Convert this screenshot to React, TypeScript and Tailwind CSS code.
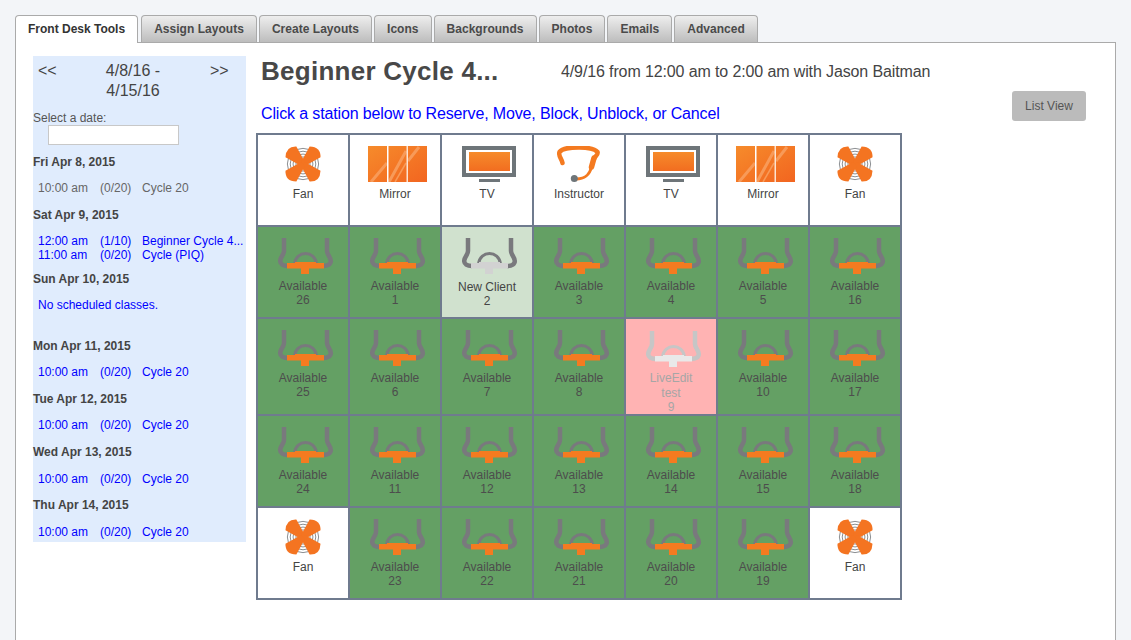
const tabs = ["Assign Layouts", "Create Layouts", "Icons", "Backgrounds", "Photos", "Emails", "Advanced"];

const days = [
  { title: "Fri Apr 8, 2015", top: "mt-[10px]", rowTop: "mt-[12px]", muted: true, rows: [["10:00 am", "(0/20)", "Cycle 20"]] },
  { title: "Sat Apr 9, 2015", top: "mt-[13px]", rowTop: "mt-[12px]", rows: [["12:00 am", "(1/10)", "Beginner Cycle 4..."], ["11:00 am", "(0/20)", "Cycle (PIQ)"]] },
  { title: "Sun Apr 10, 2015", top: "mt-[10px]", rowTop: "mt-[12px]", rows: [], empty: true },
  { title: "Mon Apr 11, 2015", top: "mt-[27px]", rowTop: "mt-[12px]", rows: [["10:00 am", "(0/20)", "Cycle 20"]] },
  { title: "Tue Apr 12, 2015", top: "mt-[13px]", rowTop: "mt-[12px]", rows: [["10:00 am", "(0/20)", "Cycle 20"]] },
  { title: "Wed Apr 13, 2015", top: "mt-[13px]", rowTop: "mt-[13px]", rows: [["10:00 am", "(0/20)", "Cycle 20"]] },
  { title: "Thu Apr 14, 2015", top: "mt-[12px]", rowTop: "mt-[13px]", rows: [["10:00 am", "(0/20)", "Cycle 20"]] },
];

function Fan() {
  return (
    <svg width="38" height="36" viewBox="0 0 38 38" className="mx-auto block">
      <g fill="none" stroke="#85888c" strokeWidth="1">
        <circle cx="19" cy="19" r="16.5" />
        <circle cx="19" cy="19" r="13.5" />
        <circle cx="19" cy="19" r="10.5" />
        <circle cx="19" cy="19" r="7.5" />
      </g>
      {[0, 90, 180, 270].map((deg) => (
        <path key={deg} transform={`rotate(${deg} 19 19)`} fill="#f47421" d="M21 17 L12 0.5 Q1 0 0.5 12 L17 21 Z" />
      ))}
    </svg>
  );
}

function Mirror() {
  return (
    <svg width="59" height="36" viewBox="0 0 59 36" className="mx-auto block translate-x-[2px]">
      <defs>
        <linearGradient id="mirrorGrad" x1="0" y1="0" x2="1" y2="1">
          <stop offset="0" stopColor="#f68b2b" />
          <stop offset="1" stopColor="#f26520" />
        </linearGradient>
      </defs>
      <rect width="59" height="36" fill="url(#mirrorGrad)" />
      <path d="M3 36 L19 17 M21 36 L38 5 M40 15 L51 1" stroke="#f89a58" strokeWidth="3" />
      <path d="M27 36 L38 17" stroke="#f89a58" strokeWidth="1.5" />
      <rect x="19" width="1.5" height="36" fill="#fff" />
      <rect x="38.5" width="1.5" height="36" fill="#fde3d0" />
    </svg>
  );
}

function Tv() {
  return (
    <svg width="54" height="36" viewBox="0 0 54 36" className="mx-auto block translate-x-[2px]">
      <defs>
        <linearGradient id="tvGrad" x1="0" y1="0" x2="0" y2="1">
          <stop offset="0" stopColor="#f68b2b" />
          <stop offset="1" stopColor="#f26d20" />
        </linearGradient>
      </defs>
      <rect x="2" y="2" width="50" height="27" fill="#fff" stroke="#6e7579" strokeWidth="4" />
      <rect x="7" y="6" width="41" height="19" fill="url(#tvGrad)" />
      <rect x="17" y="33" width="21" height="3" fill="#6e7579" />
    </svg>
  );
}

function Instructor() {
  return (
    <svg width="44" height="36" viewBox="0 0 44 36" className="mx-auto block">
      <path d="M5.5 17 C4.5 12 1 10 2.5 6 C6 1.5 15 1.5 22 1.5 C30 1.5 37 2 40.5 6 C41.5 9 38 10 37 13" fill="none" stroke="#f47a20" strokeWidth="4.5" strokeLinecap="round" />
      <path d="M37 12 L34.5 21" fill="none" stroke="#f47a20" strokeWidth="5.5" strokeLinecap="round" />
      <path d="M34.5 21 C33 27 30 33 19 33" fill="none" stroke="#f47a20" strokeWidth="3" />
      <circle cx="17.3" cy="32.5" r="3.5" fill="#6e7579" />
    </svg>
  );
}

function Bike({ bar = "#f47b20", stroke = "#79797d" }: { bar?: string; stroke?: string }) {
  return (
    <svg width="56" height="37" viewBox="0 0 56 37" className="ml-[20px] block">
      <g fill="none" stroke={stroke}>
        <path d="M6 0 V13 C6 17 2.2 19 2.2 23 C2.2 26 5 28 10 28" strokeWidth="4.5" />
        <path d="M49 0 V13 C49 17 52.8 19 52.8 23 C52.8 26 50 28 45 28" strokeWidth="4.5" />
        <path d="M16.5 26 C18 12 37 12 38.5 26" strokeWidth="3" />
      </g>
      <path d="M9 25 H17 V24 H38 V25 H46 V30.5 H31 V36 H23 V30.5 H9 Z" fill={bar} />
    </svg>
  );
}

function Station({ n, label = "Available", state }: { n: number; label?: string; state?: "new" | "blocked" }) {
  if (state === "blocked") {
    return (
      <td className="h-[97px] w-[92px] border-2 border-[#6f7b8e] bg-[#ffb3b3] p-0 pt-[12px] align-top">
        <Bike bar="#e9e9e9" stroke="#c6c6c6" />
        <div className="mt-[3px] -mb-[1px] text-center text-[12px] leading-[14.5px] text-[#a6a6a6]">
          LiveEdit
          <br />
          test
          <br />
          {n}
        </div>
      </td>
    );
  }
  const isNew = state === "new";
  return (
    <td className={`h-[92px] w-[92px] border-2 border-[#6f7b8e] p-0 pt-[11px] align-top ${isNew ? "bg-[#d0e1ce]" : "bg-[#64a064]"}`}>
      <Bike bar={isNew ? "#d2d2d2" : "#f47b20"} />
      <div className={`text-center text-[12px] leading-[14px] ${isNew ? "mt-[5px] text-[#444]" : "mt-[4px] text-[#4d4d4d]"}`}>
        {label}
        <br />
        {n}
      </div>
    </td>
  );
}

function Feature({ icon, label }: { icon: React.ReactNode; label: string }) {
  return (
    <td className="h-[92px] w-[92px] border-2 border-[#6f7b8e] bg-white p-0 pt-[11px] align-top">
      {icon}
      <div className="mt-[5px] text-center text-[12px] leading-[14px] text-[#444]">{label}</div>
    </td>
  );
}

export default function App() {
  return (
    <div className="h-[640px] overflow-hidden bg-[#f3f5f8] px-[15px] pt-[15px] font-['Liberation_Sans',Arial,sans-serif] text-[#444]">
      {/* Tabs */}
      <div className="relative z-10 flex gap-[2px]">
        <div className="mr-[1px] h-[28px] rounded-t-[4px] border border-b-0 border-[#aaa] bg-white px-[12px] pt-[6px] text-[12px] leading-[14px] font-bold text-[#333]">
          Front Desk Tools
        </div>
        {tabs.map((tab) => (
          <div
            key={tab}
            className="h-[27px] rounded-t-[4px] border border-b-0 border-[#aaa] bg-gradient-to-b from-[#eeeeee] to-[#bdbdbd] px-[12px] pt-[6px] text-[12px] leading-[14px] font-bold tracking-[0.03px] text-[#4a4a4a]"
          >
            {tab}
          </div>
        ))}
      </div>

      {/* Panel */}
      <div className="-mt-px flex h-[620px] items-start border border-[#aaa] bg-white pt-[13px] pl-[17px]">
        {/* Calendar sidebar */}
        <aside className="w-[213px] shrink-0 bg-[#e0ecfd] pt-[5px] pb-[3px] text-[12px] leading-[14px] text-[#555]">
          <div className="flex items-start text-[16px] leading-[20px] text-[#444]">
            <span className="w-[55px] pl-[5px]">&lt;&lt;</span>
            <span className="w-[90px] text-center">4/8/16 - 4/15/16</span>
            <span className="pl-[32px]">&gt;&gt;</span>
          </div>
          <div className="mt-[10px]">Select a date:</div>
          <input className="ml-[15px] block h-[20px] w-[131px] border border-[#c8c8c8] bg-white" />
          {days.map((day) => (
            <div key={day.title}>
              <div className={`${day.top} font-bold text-[#444]`}>{day.title}</div>
              {day.empty && <div className="mt-[12px] pl-[5px] text-[#0000ff]">No scheduled classes.</div>}
              <div className={day.rowTop}>
                {day.rows.map((row) => (
                  <div key={row[0]} className={`flex whitespace-nowrap pl-[5px] ${day.muted ? "text-[#666]" : "text-[#0000ff]"}`}>
                    <span className="w-[62px]">{row[0]}</span>
                    <span className="w-[42px]">{row[1]}</span>
                    <span>{row[2]}</span>
                  </div>
                ))}
              </div>
            </div>
          ))}
        </aside>

        {/* Layout */}
        <main className="ml-[10px] w-[830px] shrink-0">
          <div className="flex h-[30px] items-center pl-[5px]">
            <h1 className="w-[300px] text-[26px] leading-[30px] font-bold tracking-[0.26px] text-[#484848]">Beginner Cycle 4...</h1>
            <p className="pt-[2px] text-[16px] leading-[20px] tracking-[-0.12px] text-[#444]">4/9/16 from 12:00 am to 2:00 am with Jason Baitman</p>
          </div>
          <div className="mt-[5px] flex h-[30px] justify-between pl-[5px]">
            <p className="pt-[14px] text-[16px] leading-[18px] tracking-[-0.14px] text-[#0000ff]">Click a station below to Reserve, Move, Block, Unblock, or Cancel</p>
            <button className="h-[30px] w-[74px] rounded-[3px] bg-[#bbbbbb] text-[12px] text-[#555]">List View</button>
          </div>
          <table className="mt-[12px] border-collapse border-2 border-[#6f7b8e]">
            <tbody>
              <tr>
                <Feature icon={<Fan />} label="Fan" />
                <Feature icon={<Mirror />} label="Mirror" />
                <Feature icon={<Tv />} label="TV" />
                <Feature icon={<Instructor />} label="Instructor" />
                <Feature icon={<Tv />} label="TV" />
                <Feature icon={<Mirror />} label="Mirror" />
                <Feature icon={<Fan />} label="Fan" />
              </tr>
              <tr>
                <Station n={26} />
                <Station n={1} />
                <Station n={2} label="New Client" state="new" />
                <Station n={3} />
                <Station n={4} />
                <Station n={5} />
                <Station n={16} />
              </tr>
              <tr>
                <Station n={25} />
                <Station n={6} />
                <Station n={7} />
                <Station n={8} />
                <Station n={9} state="blocked" />
                <Station n={10} />
                <Station n={17} />
              </tr>
              <tr>
                <Station n={24} />
                <Station n={11} />
                <Station n={12} />
                <Station n={13} />
                <Station n={14} />
                <Station n={15} />
                <Station n={18} />
              </tr>
              <tr>
                <Feature icon={<Fan />} label="Fan" />
                <Station n={23} />
                <Station n={22} />
                <Station n={21} />
                <Station n={20} />
                <Station n={19} />
                <Feature icon={<Fan />} label="Fan" />
              </tr>
            </tbody>
          </table>
        </main>
      </div>
    </div>
  );
}
